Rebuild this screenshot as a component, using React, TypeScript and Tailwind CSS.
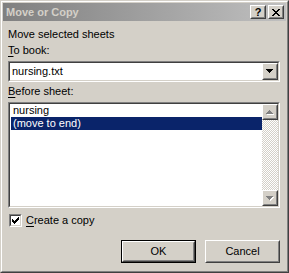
import React from 'react';

const Raised: React.FC<{ className?: string; children?: React.ReactNode }> = ({ className = '', children }) => (
  <div className={`border border-t-white border-l-white border-r-[#404040] border-b-[#404040] ${className}`}>
    <div className="flex h-full w-full items-center justify-center border border-t-[#d4d0c8] border-l-[#d4d0c8] border-r-[#808080] border-b-[#808080] bg-[#d4d0c8]">
      {children}
    </div>
  </div>
);

const Sunken: React.FC<{ className?: string; children?: React.ReactNode }> = ({ className = '', children }) => (
  <div className={`border border-t-[#808080] border-l-[#808080] border-r-white border-b-white ${className}`}>
    <div className="flex h-full w-full border border-t-[#404040] border-l-[#404040] border-r-[#d4d0c8] border-b-[#d4d0c8] bg-white">
      {children}
    </div>
  </div>
);

// triangle made of pixel rows, 7 wide
const Arrow: React.FC<{ up?: boolean; disabled?: boolean }> = ({ up, disabled }) => {
  const rows = [7, 5, 3, 1];
  const order = up ? [...rows].reverse() : rows;
  const fill = disabled ? '#808080' : '#000000';
  return (
    <svg width="8" height="5" viewBox="0 0 8 5" shapeRendering="crispEdges">
      {disabled &&
        order.map((w, i) => <rect key={'s' + i} x={(7 - w) / 2 + 1} y={i + 1} width={w} height={1} fill="#ffffff" />)}
      {order.map((w, i) => (
        <rect key={i} x={(7 - w) / 2} y={i} width={w} height={1} fill={fill} />
      ))}
    </svg>
  );
};

const CloseGlyph = () => {
  const px = ['XX....XX', '.XX..XX.', '..XXXX..', '...XX...', '..XXXX..', '.XX..XX.', 'XX....XX'];
  return (
    <svg width="8" height="7" viewBox="0 0 8 7" shapeRendering="crispEdges">
      {px.map((row, y) =>
        row.split('').map((c, x) => (c === 'X' ? <rect key={`${x}-${y}`} x={x} y={y} width={1} height={1} fill="#000" /> : null))
      )}
    </svg>
  );
};

const Check = () => {
  const cols = [2, 3, 4, 3, 2, 1, 0];
  return (
    <svg width="7" height="7" viewBox="0 0 7 7" shapeRendering="crispEdges">
      {cols.map((top, x) => (
        <rect key={x} x={x} y={top} width={1} height={3} fill="#000" />
      ))}
    </svg>
  );
};

export default function App() {
  return (
    <div className="h-[273px] w-[289px] overflow-hidden bg-[#d4d0c8] font-['Liberation_Sans',Arial,sans-serif] text-[11px] leading-[13px] text-black">
      <div className="flex h-full flex-col border border-t-[#d4d0c8] border-l-[#d4d0c8] border-r-[#404040] border-b-[#404040]">
        <div className="flex flex-1 flex-col border border-t-white border-l-white border-r-[#808080] border-b-[#808080] p-px">
          {/* Title bar */}
          <div className="flex h-[18px] items-center justify-between bg-gradient-to-r from-[#808080] to-[#c0c0c0] pl-[3px] pr-[2px]">
            <span className="font-bold text-[#d4d0c8]">Move or Copy</span>
            <div className="flex gap-[2px]">
              <Raised className="h-[14px] w-[16px]">
                <span className="text-[11px] font-bold leading-[11px]">?</span>
              </Raised>
              <Raised className="h-[14px] w-[16px]">
                <CloseGlyph />
              </Raised>
            </div>
          </div>

          {/* Body */}
          <div className="flex flex-col pl-[5px] pr-[6px]">
            <div className="mt-[7px] h-[13px]">Move selected sheets</div>
            <div className="mt-[3px] h-[13px]">
              <span className="underline underline-offset-2">T</span>o book:
            </div>

            <Sunken className="mt-[4px] h-[21px] w-[272px]">
              <div className="flex flex-1 items-center pl-[2px]">nursing.txt</div>
              <Raised className="h-[17px] w-[16px]">
                <Arrow />
              </Raised>
            </Sunken>

            <div className="mt-[3px] h-[13px]">
              <span className="underline underline-offset-2">B</span>efore sheet:
            </div>

            <Sunken className="mt-[4px] h-[106px] w-[272px]">
              <div className="flex flex-1 flex-col pl-px">
                <div className="h-[13px] pl-[2px]">nursing</div>
                <div className="h-[13px] bg-[#0a246a] pl-[2px] text-white">(move to end)</div>
              </div>
              <div className="flex w-[16px] flex-col bg-[repeating-conic-gradient(#d4d0c8_0_25%,#ffffff_0_50%)] bg-[length:2px_2px]">
                <Raised className="h-[16px] w-[16px]">
                  <Arrow up disabled />
                </Raised>
                <div className="flex-1" />
                <Raised className="h-[16px] w-[16px]">
                  <Arrow disabled />
                </Raised>
              </div>
            </Sunken>

            <div className="mt-[6px] flex h-[13px] items-center gap-[4px] pl-px">
              <Sunken className="h-[13px] w-[13px]">
                <div className="flex flex-1 items-center justify-center">
                  <Check />
                </div>
              </Sunken>
              <span>
                <span className="underline underline-offset-2">C</span>reate a copy
              </span>
            </div>

            <div className="mt-[13px] flex justify-end gap-[9px]">
              <div className="h-[23px] w-[75px] border border-black">
                <Raised className="h-full w-full">OK</Raised>
              </div>
              <Raised className="h-[23px] w-[75px]">Cancel</Raised>
            </div>
          </div>
        </div>
      </div>
    </div>
  );
}
